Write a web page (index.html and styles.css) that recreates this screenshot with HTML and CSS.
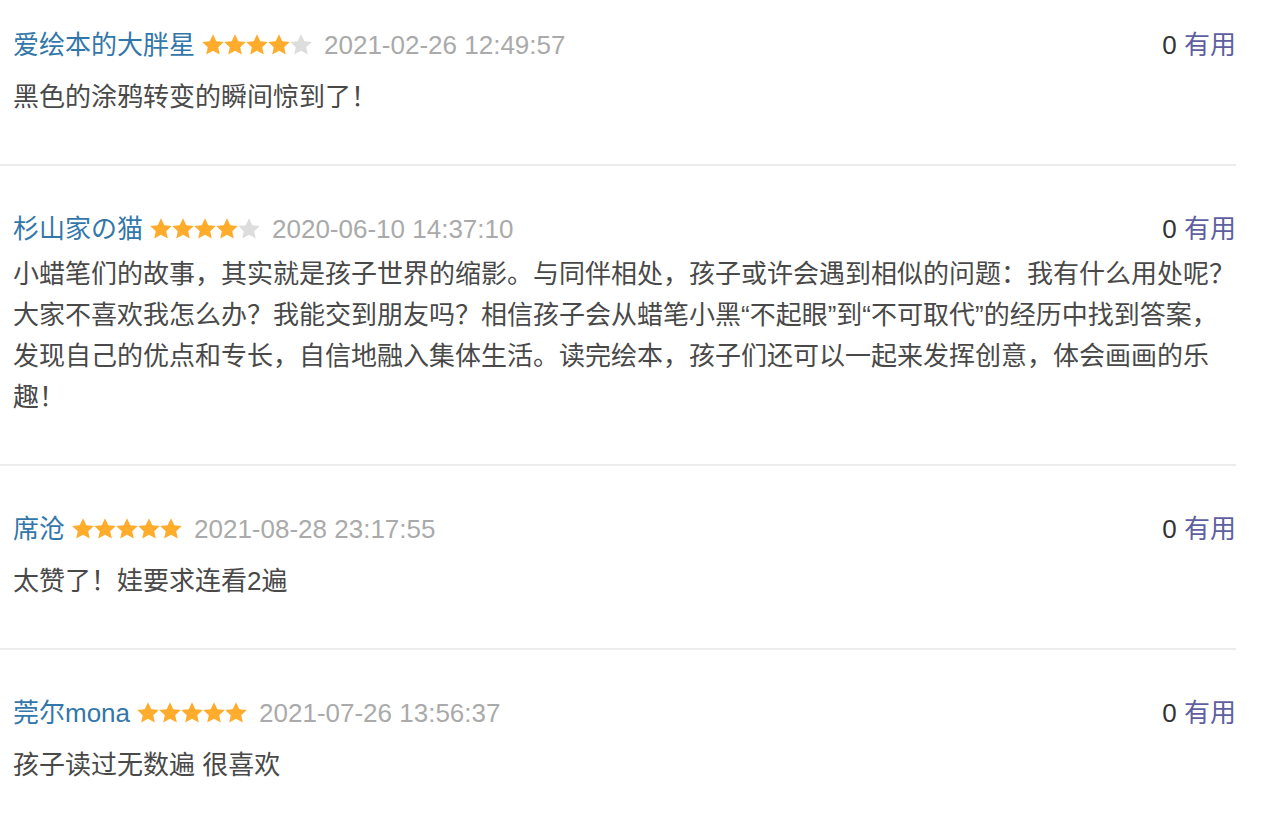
FILE: index.html
```html
<!DOCTYPE html>
<html lang="zh-CN">
<head>
<meta charset="utf-8">
<title>评论</title>
<link rel="stylesheet" href="styles.css">
</head>
<body>
<div class="comments">
  <div class="comment">
    <div class="comment-head">
      <div class="meta">
        <a class="author" href="#">爱绘本的大胖星</a>
        <svg class="stars" viewBox="0 0 110 21" width="110" height="21">
          <g class="on">
            <polygon points="11,0.3 14.3,7.2 21.8,8 16.2,13.2 17.8,20.6 11,16.8 4.2,20.6 5.8,13.2 0.2,8 7.7,7.2"/>
            <polygon transform="translate(22 0)" points="11,0.3 14.3,7.2 21.8,8 16.2,13.2 17.8,20.6 11,16.8 4.2,20.6 5.8,13.2 0.2,8 7.7,7.2"/>
            <polygon transform="translate(44 0)" points="11,0.3 14.3,7.2 21.8,8 16.2,13.2 17.8,20.6 11,16.8 4.2,20.6 5.8,13.2 0.2,8 7.7,7.2"/>
            <polygon transform="translate(66 0)" points="11,0.3 14.3,7.2 21.8,8 16.2,13.2 17.8,20.6 11,16.8 4.2,20.6 5.8,13.2 0.2,8 7.7,7.2"/>
          </g>
          <g class="off">
            <polygon transform="translate(88 0)" points="11,0.3 14.3,7.2 21.8,8 16.2,13.2 17.8,20.6 11,16.8 4.2,20.6 5.8,13.2 0.2,8 7.7,7.2"/>
          </g>
        </svg>
        <span class="time">2021-02-26 12:49:57</span>
      </div>
      <div class="vote"><span class="count">0</span> <a class="useful" href="#">有用</a></div>
    </div>
    <p class="content">黑色的涂鸦转变的瞬间惊到了！</p>
  </div>

  <div class="comment">
    <div class="comment-head">
      <div class="meta">
        <a class="author" href="#">杉山家の猫</a>
        <svg class="stars" viewBox="0 0 110 21" width="110" height="21">
          <g class="on">
            <polygon points="11,0.3 14.3,7.2 21.8,8 16.2,13.2 17.8,20.6 11,16.8 4.2,20.6 5.8,13.2 0.2,8 7.7,7.2"/>
            <polygon transform="translate(22 0)" points="11,0.3 14.3,7.2 21.8,8 16.2,13.2 17.8,20.6 11,16.8 4.2,20.6 5.8,13.2 0.2,8 7.7,7.2"/>
            <polygon transform="translate(44 0)" points="11,0.3 14.3,7.2 21.8,8 16.2,13.2 17.8,20.6 11,16.8 4.2,20.6 5.8,13.2 0.2,8 7.7,7.2"/>
            <polygon transform="translate(66 0)" points="11,0.3 14.3,7.2 21.8,8 16.2,13.2 17.8,20.6 11,16.8 4.2,20.6 5.8,13.2 0.2,8 7.7,7.2"/>
          </g>
          <g class="off">
            <polygon transform="translate(88 0)" points="11,0.3 14.3,7.2 21.8,8 16.2,13.2 17.8,20.6 11,16.8 4.2,20.6 5.8,13.2 0.2,8 7.7,7.2"/>
          </g>
        </svg>
        <span class="time">2020-06-10 14:37:10</span>
      </div>
      <div class="vote"><span class="count">0</span> <a class="useful" href="#">有用</a></div>
    </div>
    <p class="content content-full">小蜡笔们的故事，其实就是孩子世界的缩影。与同伴相处，孩子或许会遇到相似的问题：我有什么用处呢？大家不喜欢我怎么办？我能交到朋友吗？相信孩子会从蜡笔小黑“不起眼”到“不可取代”的经历中找到答案，发现自己的优点和专长，自信地融入集体生活。读完绘本，孩子们还可以一起来发挥创意，体会画画的乐趣！</p>
  </div>

  <div class="comment">
    <div class="comment-head">
      <div class="meta">
        <a class="author" href="#">席沧</a>
        <svg class="stars" viewBox="0 0 110 21" width="110" height="21">
          <g class="on">
            <polygon points="11,0.3 14.3,7.2 21.8,8 16.2,13.2 17.8,20.6 11,16.8 4.2,20.6 5.8,13.2 0.2,8 7.7,7.2"/>
            <polygon transform="translate(22 0)" points="11,0.3 14.3,7.2 21.8,8 16.2,13.2 17.8,20.6 11,16.8 4.2,20.6 5.8,13.2 0.2,8 7.7,7.2"/>
            <polygon transform="translate(44 0)" points="11,0.3 14.3,7.2 21.8,8 16.2,13.2 17.8,20.6 11,16.8 4.2,20.6 5.8,13.2 0.2,8 7.7,7.2"/>
            <polygon transform="translate(66 0)" points="11,0.3 14.3,7.2 21.8,8 16.2,13.2 17.8,20.6 11,16.8 4.2,20.6 5.8,13.2 0.2,8 7.7,7.2"/>
            <polygon transform="translate(88 0)" points="11,0.3 14.3,7.2 21.8,8 16.2,13.2 17.8,20.6 11,16.8 4.2,20.6 5.8,13.2 0.2,8 7.7,7.2"/>
          </g>
        </svg>
        <span class="time">2021-08-28 23:17:55</span>
      </div>
      <div class="vote"><span class="count">0</span> <a class="useful" href="#">有用</a></div>
    </div>
    <p class="content">太赞了！娃要求连看2遍</p>
  </div>

  <div class="comment">
    <div class="comment-head">
      <div class="meta">
        <a class="author" href="#">莞尔mona</a>
        <svg class="stars" viewBox="0 0 110 21" width="110" height="21">
          <g class="on">
            <polygon points="11,0.3 14.3,7.2 21.8,8 16.2,13.2 17.8,20.6 11,16.8 4.2,20.6 5.8,13.2 0.2,8 7.7,7.2"/>
            <polygon transform="translate(22 0)" points="11,0.3 14.3,7.2 21.8,8 16.2,13.2 17.8,20.6 11,16.8 4.2,20.6 5.8,13.2 0.2,8 7.7,7.2"/>
            <polygon transform="translate(44 0)" points="11,0.3 14.3,7.2 21.8,8 16.2,13.2 17.8,20.6 11,16.8 4.2,20.6 5.8,13.2 0.2,8 7.7,7.2"/>
            <polygon transform="translate(66 0)" points="11,0.3 14.3,7.2 21.8,8 16.2,13.2 17.8,20.6 11,16.8 4.2,20.6 5.8,13.2 0.2,8 7.7,7.2"/>
            <polygon transform="translate(88 0)" points="11,0.3 14.3,7.2 21.8,8 16.2,13.2 17.8,20.6 11,16.8 4.2,20.6 5.8,13.2 0.2,8 7.7,7.2"/>
          </g>
        </svg>
        <span class="time">2021-07-26 13:56:37</span>
      </div>
      <div class="vote"><span class="count">0</span> <a class="useful" href="#">有用</a></div>
    </div>
    <p class="content">孩子读过无数遍 很喜欢</p>
  </div>
</div>
</body>
</html>
```

FILE: styles.css
```css
html, body {
  margin: 0;
  padding: 0;
  background: #fff;
}

body {
  font-family: "Liberation Sans", "Noto Sans CJK SC", sans-serif;
  font-size: 26px;
  color: #494949;
}

.comments {
  width: 1236px;
}

.comment {
  padding: 43px 0 46px 13px;
  border-bottom: 2px solid #ececec;
}

.comment:first-child {
  padding-top: 25px;
}

.comment:last-child {
  border-bottom: none;
}

.comment-head {
  display: flex;
  justify-content: space-between;
  align-items: center;
  height: 40px;
  line-height: 40px;
}

.meta {
  display: flex;
  align-items: center;
}

.author {
  color: #3377aa;
  text-decoration: none;
  margin-right: 7px;
}

.stars {
  display: block;
  margin-right: 12px;
  margin-top: -2px;
}

.stars .on {
  fill: #ffac2d;
}

.stars .off {
  fill: #dddddd;
}

.time {
  color: #aaaaaa;
}

.vote {
  white-space: nowrap;
}

.count {
  color: #333333;
}

.useful {
  color: #5f5f9f;
  text-decoration: none;
}

.content {
  margin: 12px 0 0;
  line-height: 41px;
  color: #494949;
}

.content-full {
  margin-top: 5px;
}
```
